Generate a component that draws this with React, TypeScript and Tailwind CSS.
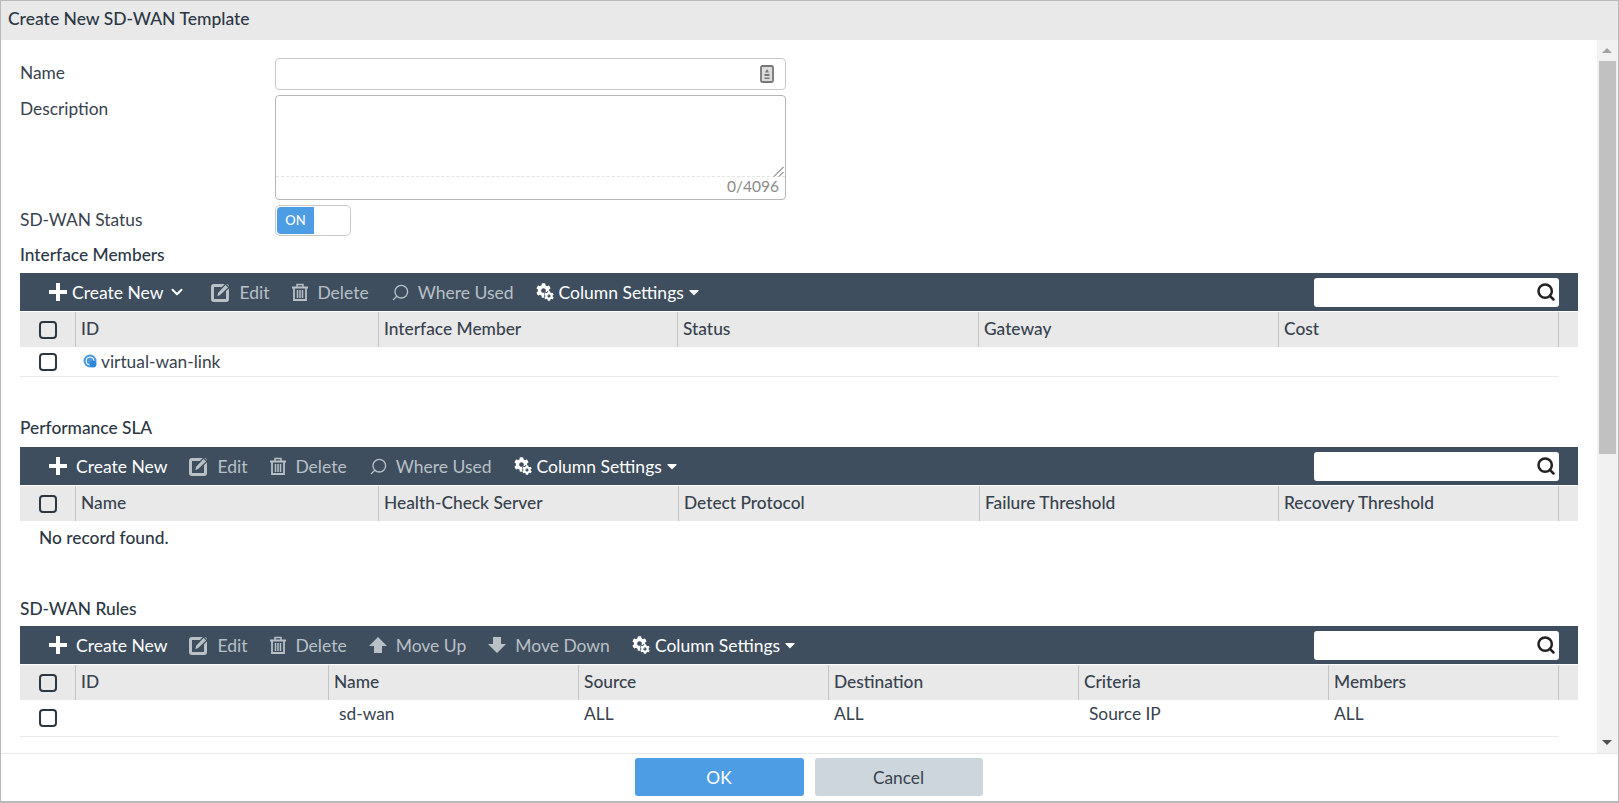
import type { ReactNode } from 'react';
import { FaCog, FaCaretDown } from 'react-icons/fa';
import { ChevronDown, Search } from 'lucide-react';

function PlusIcon() {
  return (
    <svg viewBox="0 0 18 18" className="h-[18px] w-[18px]" fill="currentColor">
      <path d="M7 0h4v7h7v4h-7v7H7v-7H0V7h7z" />
    </svg>
  );
}

function EditIcon() {
  return (
    <svg viewBox="0 0 20 20" className="h-[20px] w-[20px]">
      <rect x="1.5" y="3.5" width="15" height="15" rx="1.5" fill="none" stroke="currentColor" strokeWidth="3" />
      <path d="M5.5 15l1-4.5 8-8.5 3.5 3.5-8.5 8z" fill="currentColor" stroke="#3e4e5e" strokeWidth="1.2" />
    </svg>
  );
}

function TrashIcon() {
  return (
    <svg viewBox="0 0 18 18" className="h-[18px] w-[18px]" fill="none" stroke="currentColor">
      <path d="M1 4.5h16" strokeWidth="2" />
      <path d="M6 4V1.5h6V4" strokeWidth="1.5" />
      <path d="M3 5v12h12V5" strokeWidth="1.8" />
      <path d="M6.5 7v8M9 7v8M11.5 7v8" strokeWidth="1.5" />
    </svg>
  );
}

function ArrowIcon({ down }: { down?: boolean }) {
  return (
    <svg viewBox="0 0 18 16" className={`h-[16px] w-[18px] ${down ? 'rotate-180' : ''}`} fill="currentColor">
      <path d="M9 0l9 9h-5v7H5V9H0z" />
    </svg>
  );
}

function CogsIcon() {
  return (
    <span className="relative block h-[18px] w-[18px]">
      <FaCog className="h-[15px] w-[15px]" />
      <FaCog className="absolute bottom-0 right-0 h-[10px] w-[10px] stroke-[#3e4e5e] stroke-[70px] [paint-order:stroke]" />
    </span>
  );
}

function ToolButton({
  icon,
  label,
  dim,
  tail,
  gapClass = 'gap-[8px]',
}: {
  icon: ReactNode;
  label: string;
  dim?: boolean;
  tail?: ReactNode;
  gapClass?: string;
}) {
  return (
    <div className={`flex items-center ${gapClass} ${dim ? 'text-[#b9c0c6]' : 'text-white'}`}>
      {icon}
      <span className="pt-[2px]">{label}</span>
      {tail}
    </div>
  );
}

function Toolbar({ children }: { children: ReactNode }) {
  return (
    <div className="flex h-[38px] items-center justify-between bg-[#3e4e5e] pl-[29px] pr-[19px] text-[17.5px]">
      <div className="flex items-center gap-[22px]">{children}</div>
      <div className="flex h-[29px] w-[245px] items-center justify-end rounded-[3px] bg-white pr-[3px]">
        <Search className="h-[20px] w-[20px] text-[#222]" strokeWidth={3} />
      </div>
    </div>
  );
}

function Checkbox() {
  return <div className="h-[18px] w-[18px] rounded-[4px] border-2 border-[#2c3744] bg-transparent" />;
}

function HeaderRow({ cols, gridClass }: { cols: string[]; gridClass: string }) {
  return (
    <div className={`mt-px grid h-[35px] items-stretch bg-[#e9e9e9] text-[17.33px] font-medium text-[#37424e] ${gridClass}`}>
      <div className="flex items-center justify-center">
        <Checkbox />
      </div>
      {cols.map((c) => (
        <div key={c} className="flex items-center border-l border-[#c4c4c4] pb-[1px] pl-[5px]">
          {c}
        </div>
      ))}
      <div className="border-l border-[#c4c4c4]" />
    </div>
  );
}

const WhereUsedIcon = <Search className="h-[19px] w-[19px] -scale-x-100" strokeWidth={1.7} />;
const CaretTail = <FaCaretDown className="h-[16px] w-[10px]" />;
const MEMBER_GRID = 'grid-cols-[55px_303px_299px_301px_300px_280px_20px]';
const SLA_GRID = 'grid-cols-[55px_303px_300px_301px_299px_280px_20px]';
const RULE_GRID = 'grid-cols-[55px_253px_250px_250px_250px_250px_230px_20px]';

function FormRow({ label, children, className }: { label: string; children: ReactNode; className: string }) {
  return (
    <div className={`flex ${className}`}>
      <div className="w-[255px] text-[17.33px] text-[#37424e]">{label}</div>
      {children}
    </div>
  );
}

function SectionTitle({ text, className }: { text: string; className: string }) {
  return <div className={`h-[19px] text-[17.33px] font-medium leading-[19px] text-[#2c3744] ${className}`}>{text}</div>;
}

export default function App() {
  return (
    <div className="flex h-[803px] w-[1619px] flex-col overflow-hidden border border-b-2 border-[#b9b9b9] bg-white font-['Lato',sans-serif] text-[#37424e]">
      <div className="flex h-[39px] shrink-0 items-center bg-[#e9e9e9] pb-[3px] pl-[7px] text-[17.5px] font-medium text-[#2c3744]">
        Create New SD-WAN Template
      </div>

      <div className="flex min-h-0 flex-1">
        <div className="min-w-0 flex-1 overflow-hidden pl-[19px] pr-[19px]">
          <FormRow label="Name" className="mt-[18px] h-[32px] items-start leading-[29px]">
            <div className="flex h-[32px] w-[511px] items-center justify-end rounded-[4px] border border-[#c9c9c9] pr-[11px]">
              <svg viewBox="0 0 14 18" className="h-[18px] w-[14px]" fill="none">
                <rect x="1" y="1" width="12" height="16" rx="1.5" stroke="#777" strokeWidth="1.8" fill="#ddd" />
                <path d="M7 4l2 3.5H5zM4.5 9h5v2h-5zM4.5 12.5h5v1.5h-5z" fill="#777" />
              </svg>
            </div>
          </FormRow>

          <FormRow label="Description" className="mt-[5px] h-[105px] leading-[28px]">
            <div className="relative flex h-[105px] w-[511px] flex-col rounded-[4px] border border-[#b5b5b5]">
              <div className="h-[81px] shrink-0 border-b border-dashed border-[#e3e3e3]" />
              <div className="pr-[6px] text-right text-[15.5px] leading-[19px] text-[#8b8b8b]">0/4096</div>
              <svg viewBox="0 0 11 11" className="absolute right-[1px] top-[70px] h-[11px] w-[11px]" stroke="#555" fill="none">
                <path d="M1 10.5L10.5 1M6 10.5L10.5 6" />
              </svg>
            </div>
          </FormRow>

          <FormRow label="SD-WAN Status" className="mt-[5px] h-[31px] items-start leading-[29px]">
            <div className="h-[31px] w-[76px] rounded-[5px] border border-[#c9c9c9] p-px">
              <div className="flex h-full w-[37px] items-center justify-center rounded-l-[4px] bg-[#4d9de5] text-[13px] font-medium text-white">
                ON
              </div>
            </div>
          </FormRow>

          <SectionTitle text="Interface Members" className="mt-[9px]" />
          <div className="mt-[9px]">
            <Toolbar>
              <ToolButton
                gapClass="gap-[5px]"
                icon={<PlusIcon />}
                label="Create New"
                tail={<ChevronDown className="mr-[3px] h-[18px] w-[18px]" strokeWidth={2.6} />}
              />
              <ToolButton dim icon={<EditIcon />} label="Edit" />
              <ToolButton dim icon={<TrashIcon />} label="Delete" />
              <ToolButton dim icon={WhereUsedIcon} label="Where Used" />
              <ToolButton gapClass="gap-[5px]" icon={<CogsIcon />} label="Column Settings" tail={CaretTail} />
            </Toolbar>
            <HeaderRow cols={['ID', 'Interface Member', 'Status', 'Gateway', 'Cost']} gridClass={MEMBER_GRID} />
            <div className="mr-[19px] flex h-[30px] items-center border-b border-[#e9e9e9]">
              <div className="flex w-[55px] justify-center">
                <Checkbox />
              </div>
              <div className="flex items-center gap-[4px] pl-[8px] text-[17.33px]">
                <svg viewBox="0 0 14 14" className="h-[14px] w-[14px]">
                  <circle cx="7" cy="7" r="6.5" fill="#4d9de5" />
                  <circle cx="7" cy="7" r="4" fill="none" stroke="#fff" strokeWidth="1" />
                  <circle cx="10" cy="10" r="3.5" fill="#2f86d6" />
                </svg>
                virtual-wan-link
              </div>
            </div>
          </div>

          <SectionTitle text="Performance SLA" className="mt-[41px]" />
          <div className="mt-[10px]">
            <Toolbar>
              <ToolButton gapClass="gap-[9px]" icon={<PlusIcon />} label="Create New" />
              <ToolButton dim icon={<EditIcon />} label="Edit" />
              <ToolButton dim icon={<TrashIcon />} label="Delete" />
              <ToolButton dim icon={WhereUsedIcon} label="Where Used" />
              <ToolButton gapClass="gap-[5px]" icon={<CogsIcon />} label="Column Settings" tail={CaretTail} />
            </Toolbar>
            <HeaderRow cols={['Name', 'Health-Check Server', 'Detect Protocol', 'Failure Threshold', 'Recovery Threshold']} gridClass={SLA_GRID} />
            <div className="flex h-[35px] items-center pb-[2px] pl-[19px] text-[17.33px] font-medium text-[#2c3744]">No record found.</div>
          </div>

          <SectionTitle text="SD-WAN Rules" className="mt-[43px]" />
          <div className="mt-[8px]">
            <Toolbar>
              <ToolButton gapClass="gap-[9px]" icon={<PlusIcon />} label="Create New" />
              <ToolButton dim icon={<EditIcon />} label="Edit" />
              <ToolButton dim icon={<TrashIcon />} label="Delete" />
              <ToolButton dim gapClass="gap-[9px]" icon={<ArrowIcon />} label="Move Up" />
              <ToolButton dim gapClass="gap-[9px]" icon={<ArrowIcon down />} label="Move Down" />
              <ToolButton gapClass="gap-[5px]" icon={<CogsIcon />} label="Column Settings" tail={CaretTail} />
            </Toolbar>
            <HeaderRow cols={['ID', 'Name', 'Source', 'Destination', 'Criteria', 'Members']} gridClass={RULE_GRID} />
            <div className="mr-[19px] grid h-[37px] grid-cols-[55px_253px_250px_250px_250px_250px_230px] items-center border-b border-[#e9e9e9] text-[17.33px]">
              <div className="flex justify-center pb-[1px]">
                <Checkbox />
              </div>
              <div />
              <div className="pb-[9px] pl-[11px]">sd-wan</div>
              <div className="pb-[9px] pl-[6px]">ALL</div>
              <div className="pb-[9px] pl-[6px]">ALL</div>
              <div className="pb-[9px] pl-[11px]">Source IP</div>
              <div className="pb-[9px] pl-[6px]">ALL</div>
            </div>
          </div>
        </div>

        <div className="flex w-[21px] shrink-0 flex-col items-center bg-[#f1f1f1] pr-[1px]">
          <div className="flex h-[21px] items-center justify-center">
            <div className="h-0 w-0 border-x-[5px] border-b-[5px] border-x-transparent border-b-[#a3a3a3]" />
          </div>
          <div className="h-[393px] w-[17px] bg-[#c1c1c1]" />
          <div className="flex-1" />
          <div className="flex h-[21px] items-center justify-center">
            <div className="h-0 w-0 border-x-[5px] border-t-[5px] border-x-transparent border-t-[#505050]" />
          </div>
        </div>
      </div>

      <div className="flex h-[48px] shrink-0 justify-center gap-[11px] border-t border-[#e9e9e9] pr-[2px] pt-[4px] text-[17.33px]">
        <div className="flex h-[38px] w-[169px] items-center justify-center rounded-[3px] bg-[#4d9de5] pt-[1px] text-white">OK</div>
        <div className="flex h-[38px] w-[168px] items-center justify-center rounded-[3px] bg-[#cdd6dc] pt-[1px] text-[#37424e]">Cancel</div>
      </div>
    </div>
  );
}
